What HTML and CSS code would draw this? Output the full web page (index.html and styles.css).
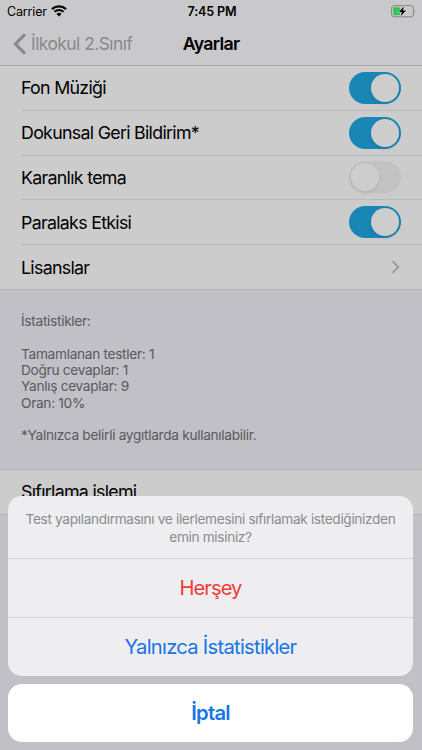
FILE: index.html
```html
<!DOCTYPE html>
<html lang="tr">
  <head>
    <meta charset="UTF-8" />
    <meta name="viewport" content="width=device-width, initial-scale=1.0" />
    <title>Ayarlar</title>
    <link rel="stylesheet" href="styles.css">
  </head>
  <body>
    <div class="screen">
      <!-- Status bar -->
      <div class="status-bar">
        <div class="status-left">
          <span class="carrier">Carrier</span>
          <svg class="wifi" width="16" height="12" viewBox="0 0 16 12">
            <path d="M1 4.1 A10.2 10.2 0 0 1 15 4.1" fill="none" stroke="#000" stroke-width="2.2" />
            <path d="M3.5 6.8 A6.5 6.5 0 0 1 12.5 6.8" fill="none" stroke="#000" stroke-width="2" />
            <path d="M8 11.5 L5.5 9 A3.6 3.6 0 0 1 10.5 9 Z" />
          </svg>
        </div>
        <span class="time">7:45 PM</span>
        <svg class="battery" width="26" height="13" viewBox="0 0 26 13">
          <rect x="0.6" y="0.6" width="21.8" height="11.2" rx="2.6" fill="none" stroke="#858587" />
          <rect x="2.2" y="2.2" width="7" height="8" rx="1" fill="#32c654" />
          <path d="M23.8 4.3 Q25 6.2 23.8 8.2 Z" fill="#858587" />
          <path d="M12.8 1.6 L8 7 H10.9 L9.8 11 L15 5.4 H12 Z" fill="#000" stroke="#c9c9cb" stroke-width="1.4" paint-order="stroke" />
        </svg>
      </div>

      <!-- Navigation bar -->
      <div class="nav-bar">
        <div class="back">
          <svg width="14" height="22" viewBox="0 0 14 22">
            <path d="M12 1.4 L2.4 11 L12 20.6" fill="none" stroke="#88888a" stroke-width="3" />
          </svg>
          <span class="back-label">İlkokul 2.Sınıf</span>
        </div>
        <span class="title">Ayarlar</span>
      </div>

      <!-- Settings -->
      <div class="list">
        <div class="row">
          <span class="label">Fon Müziği</span>
          <span class="switch on"></span>
        </div>
        <div class="row">
          <span class="label">Dokunsal Geri Bildirim*</span>
          <span class="switch on"></span>
        </div>
        <div class="row">
          <span class="label">Karanlık tema</span>
          <span class="switch"></span>
        </div>
        <div class="row">
          <span class="label">Paralaks Etkisi</span>
          <span class="switch on"></span>
        </div>
        <div class="row">
          <span class="label">Lisanslar</span>
          <svg class="chevron" width="10" height="14" viewBox="0 0 10 14">
            <path d="M1.5 1.2 L7.3 7 L1.5 12.8" fill="none" stroke="#98989b" stroke-width="1.9" />
          </svg>
        </div>
      </div>

      <div class="stats">
        <p>İstatistikler:</p>
        <p>Tamamlanan testler: 1<br />Doğru cevaplar: 1<br />Yanlış cevaplar: 9<br />Oran: 10%</p>
        <p>*Yalnızca belirli aygıtlarda kullanılabilir.</p>
      </div>

      <div class="list list-reset">
        <div class="row">
          <span class="label">Sıfırlama işlemi</span>
        </div>
      </div>
    </div>

    <!-- Action sheet -->
    <div class="sheet">
      <div class="sheet-group">
        <p class="message">Test yapılandırmasını ve ilerlemesini sıfırlamak istediğinizden<br />emin misiniz?</p>
        <button class="action destructive">Herşey</button>
        <button class="action">Yalnızca İstatistikler</button>
      </div>
      <button class="action cancel">İptal</button>
    </div>
  </body>
</html>
```
FILE: styles.css
```css
* {
  box-sizing: border-box;
}

body {
  margin: 0;
  width: 422px;
  height: 750px;
  overflow: hidden;
  position: relative;
  background: #c1c0c6;
  color: #000;
  font-family: Inter, "Liberation Sans", sans-serif;
}

p {
  margin: 0;
}

span {
  white-space: nowrap;
}

svg {
  display: block;
}

/* Status bar */
.status-bar {
  display: grid;
  grid-template-columns: 1fr auto 1fr;
  align-items: center;
  height: 22px;
  padding: 0 5px 0 7px;
  background: #c9c9cb;
}

.status-left {
  display: flex;
  align-items: center;
  gap: 4px;
}

.carrier {
  font-size: 12.5px;
  letter-spacing: -0.15px;
}

.time {
  font-size: 12.6px;
  font-weight: 600;
  letter-spacing: -0.15px;
}

.battery {
  justify-self: end;
}

/* Navigation bar */
.nav-bar {
  display: grid;
  grid-template-columns: 1fr auto 1fr;
  align-items: center;
  height: 44px;
  padding: 0 13px;
  background: #c9c9cb;
  border-bottom: 1px solid #a6a6a9;
}

.back {
  display: flex;
  align-items: center;
  gap: 4px;
  color: #88888a;
}

.back-label {
  font-size: 17.4px;
  letter-spacing: -0.53px;
}

.title {
  font-size: 17.8px;
  font-weight: 600;
  letter-spacing: -0.7px;
}

/* Settings list */
.list {
  background: #cccccc;
  padding-left: 21px;
  border-bottom: 1px solid #b4b4b7;
}

.row {
  display: flex;
  justify-content: space-between;
  align-items: center;
  height: 44.8px;
  padding-right: 21px;
  border-bottom: 1px solid #bababc;
}

.row:last-child {
  border-bottom: none;
  height: 44px;
}

.label {
  font-size: 17.8px;
  letter-spacing: -0.7px;
}

.switch {
  width: 52px;
  height: 32px;
  padding: 2px;
  border-radius: 16px;
  background: #c2c2c2;
}

.switch::before {
  content: "";
  display: block;
  width: 28px;
  height: 28px;
  border-radius: 50%;
  background: #cdcdcd;
  box-shadow: 0 2px 4px rgba(0, 0, 0, 0.08);
}

.switch.on {
  background: #1986b5;
}

.switch.on::before {
  margin-left: 20px;
}

/* Statistics */
.stats {
  display: flex;
  flex-direction: column;
  gap: 16.3px;
  height: 178.5px;
  padding: 23px 21px 0;
  color: #59595d;
  font-size: 13.7px;
  letter-spacing: -0.31px;
  line-height: 16.3px;
}

.list-reset {
  border-top: 1px solid #b4b4b7;
}

/* Action sheet */
.sheet {
  position: absolute;
  left: 8px;
  right: 9px;
  bottom: 8.5px;
  display: flex;
  flex-direction: column;
  gap: 8px;
}

.sheet-group {
  border-radius: 14px;
  background: #eeeef0;
  overflow: hidden;
}

.message {
  height: 62px;
  padding-top: 14px;
  color: #8b8b8f;
  font-size: 13.7px;
  letter-spacing: -0.35px;
  line-height: 18px;
  text-align: center;
  white-space: nowrap;
}

.action {
  display: block;
  width: 100%;
  height: 59px;
  padding: 0;
  border: none;
  border-top: 1px solid #d3d3d6;
  background: transparent;
  color: #1675e8;
  font-family: inherit;
  font-size: 20.2px;
  letter-spacing: -0.73px;
}

.destructive {
  color: #f03c35;
  letter-spacing: -0.95px;
}

.cancel {
  height: 58px;
  border-top: none;
  border-radius: 14px;
  background: #fff;
  font-weight: 600;
}
```
